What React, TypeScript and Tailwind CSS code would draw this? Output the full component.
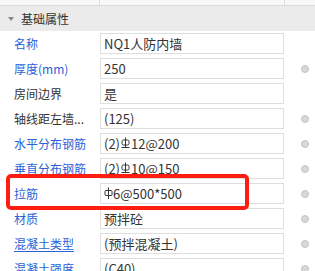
const rows: { label: string; value: React.ReactNode; blue: boolean; dot: boolean; underline?: boolean }[] = []

function Hrb({ className = '' }: { className?: string }) {
  return (
    <svg viewBox="0 0 9 13" className={`inline-block h-[13px] w-[9px] ${className}`} fill="none" stroke="#333" strokeWidth="1">
      <rect x="1" y="3" width="7" height="5" rx="1.5" />
      <line x1="4.5" y1="0.5" x2="4.5" y2="11" />
      <line x1="0.5" y1="10.5" x2="8.5" y2="10.5" />
    </svg>
  )
}

function Hpb() {
  return (
    <svg viewBox="0 0 9 13" className="inline-block h-[13px] w-[9px]" fill="none" stroke="#333" strokeWidth="1">
      <rect x="1" y="3.5" width="7" height="5" rx="1" />
      <line x1="4.5" y1="0.5" x2="4.5" y2="12" />
    </svg>
  )
}

rows.push(
  { label: '名称', value: 'NQ1人防内墙', blue: true, dot: false },
  { label: '厚度(mm)', value: '250', blue: true, dot: true },
  { label: '房间边界', value: '是', blue: false, dot: false },
  { label: '轴线距左墙...', value: '(125)', blue: false, dot: true },
  { label: '水平分布钢筋', value: <>(2)<Hrb className="mx-px" />12@200</>, blue: true, dot: true },
  { label: '垂直分布钢筋', value: <>(2)<Hrb className="mx-px" />10@150</>, blue: true, dot: true },
  { label: '拉筋', value: <><Hpb />6@500*500</>, blue: true, dot: true },
  { label: '材质', value: '预拌砼', blue: true, dot: true },
  { label: '混凝土类型', value: '(预拌混凝土)', blue: true, dot: true, underline: true },
  { label: '混凝土强度', value: '(C40)', blue: true, dot: true },
)

export default function App() {
  return (
    <div
      className="relative h-[271px] w-[315px] overflow-hidden bg-white text-[13px] text-[#333]"
      style={{ fontFamily: '"Noto Sans CJK SC", "Microsoft YaHei", sans-serif' }}
    >
      <div className="flex h-[6px] border-b border-[#dcdcdc] bg-[#f7f7f7]">
        <div className="w-[100px] border-r border-[#dcdcdc]" />
        <div className="w-[185px] border-r border-[#dcdcdc]" />
      </div>
      <div className="flex h-[25px] items-center bg-[#ebebeb]">
        <span className="ml-[8px] mr-[7px] h-0 w-0 border-x-[3px] border-t-[4px] border-x-transparent border-t-[#888]" />
        <span className="text-[12px] leading-[18px]">基础属性</span>
      </div>
      {rows.map((r) => (
        <div key={r.label} className="flex h-[25px] items-center">
          <div
            className={`w-[100px] whitespace-nowrap pl-[14px] text-[12px] leading-[18px] ${r.blue ? 'text-[#2a62d8]' : 'text-[#333]'} ${r.underline ? 'underline underline-offset-2' : ''}`}
          >
            {r.label}
          </div>
          <div className="flex h-[21px] w-[184px] items-center border border-[#dedede] pl-[3px] leading-[18px]">
            {r.value}
          </div>
          {r.dot && <span className="ml-[17px] h-[8px] w-[8px] rounded-full border border-[#c4c4c4] bg-[#d8d8d8]" />}
        </div>
      ))}
      <div className="absolute left-[6px] top-[174px] h-[36px] w-[243px] rounded-[5px] border-4 border-[#ff1d12]" />
    </div>
  )
}
